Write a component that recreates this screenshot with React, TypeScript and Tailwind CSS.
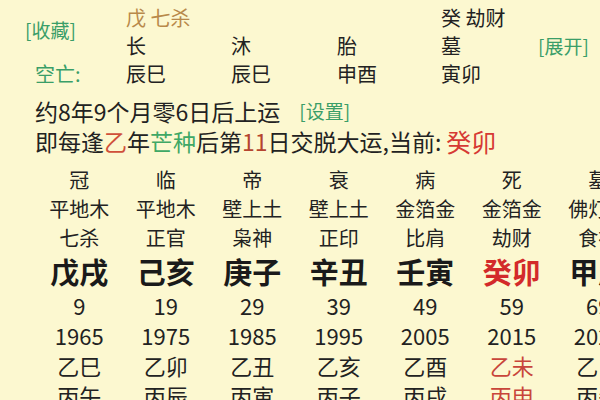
import React from "react";

type Col = {
  a: string;
  b: string;
  c: string;
  d: string;
  age: string;
  yr: string;
  e: string;
  f: string;
  hl?: boolean;
};

const cols: Col[] = [
  { a: "冠", b: "平地木", c: "七杀", d: "戊戌", age: "9", yr: "1965", e: "乙巳", f: "丙午" },
  { a: "临", b: "平地木", c: "正官", d: "己亥", age: "19", yr: "1975", e: "乙卯", f: "丙辰" },
  { a: "帝", b: "壁上土", c: "枭神", d: "庚子", age: "29", yr: "1985", e: "乙丑", f: "丙寅" },
  { a: "衰", b: "壁上土", c: "正印", d: "辛丑", age: "39", yr: "1995", e: "乙亥", f: "丙子" },
  { a: "病", b: "金箔金", c: "比肩", d: "壬寅", age: "49", yr: "2005", e: "乙酉", f: "丙戌" },
  { a: "死", b: "金箔金", c: "劫财", d: "癸卯", age: "59", yr: "2015", e: "乙未", f: "丙申", hl: true },
  { a: "墓", b: "佛灯火", c: "食神", d: "甲辰", age: "69", yr: "2025", e: "乙巳", f: "丙午" },
];

export default function App() {
  return (
    <div
      className="w-[600px] h-[400px] overflow-hidden bg-[#fcf8d0] text-[#222222]"
      style={{ fontFamily: '"Noto Sans CJK SC", "Noto Sans", sans-serif' }}
    >
      {/* top section */}
      <div className="pt-[4px] grid grid-cols-[126px_105px_106px_104px_97px_1fr] grid-rows-[28px_28px_28px] text-[20px] leading-[28px]">
        <div className="row-span-2 flex items-center pl-[25px] pb-[4px] text-[#3a9e68] text-[19px]">[收藏]</div>
        <div className="text-[#b8894a]">戊 七杀</div>
        <div></div>
        <div></div>
        <div>癸 劫财</div>
        <div></div>

        <div>长</div>
        <div>沐</div>
        <div>胎</div>
        <div>墓</div>
        <div className="text-[#3a9e68] text-[19px]">[展开]</div>

        <div className="pl-[35px] text-[#3a9e68]">空亡:</div>
        <div>辰巳</div>
        <div>辰巳</div>
        <div>申酉</div>
        <div>寅卯</div>
        <div></div>
      </div>

      {/* info lines */}
      <div className="mt-[8px] pl-[35px] text-[23px] leading-[30px]">
        <div className="flex items-center whitespace-nowrap">
          <span>约8年9个月零6日后上运</span>
          <span className="ml-[19px] text-[19px] text-[#3a9e68]">[设置]</span>
        </div>
        <div className="flex items-center whitespace-nowrap">
          <span>即每逢</span>
          <span className="text-[#d0503a]">乙</span>
          <span>年</span>
          <span className="text-[#3fa866]">芒种</span>
          <span>后第</span>
          <span className="text-[#b5452f]">11</span>
          <span>日交脱大运,当前:</span>
          <span className="ml-[5px] text-[25px] text-[#d63a34]">癸卯</span>
        </div>
      </div>

      {/* luck pillars */}
      <div className="mt-[9px] pl-[36px] flex">
        {cols.map((c, i) => (
          <div key={i} className="w-[86.5px] shrink-0 flex flex-col items-center whitespace-nowrap">
            <div className="h-[29px] leading-[29px] text-[20px]">{c.a}</div>
            <div className="h-[29px] leading-[29px] text-[20px]">{c.b}</div>
            <div className="h-[29px] leading-[29px] text-[20px]">{c.c}</div>
            <div
              className={
                "h-[36px] leading-[36px] text-[29px] font-bold mt-[1px] " +
                (c.hl ? "text-[#d32a2a]" : "text-[#1a1a1a]")
              }
            >
              {c.d}
            </div>
            <div className="h-[30px] leading-[30px] text-[22px] mt-[1px]">{c.age}</div>
            <div className="h-[30px] leading-[30px] text-[22px]">{c.yr}</div>
            <div className={"h-[30px] leading-[30px] text-[22px] " + (c.hl ? "text-[#c8453a]" : "")}>{c.e}</div>
            <div className={"h-[30px] leading-[30px] text-[22px] " + (c.hl ? "text-[#c8453a]" : "")}>{c.f}</div>
          </div>
        ))}
      </div>
    </div>
  );
}
